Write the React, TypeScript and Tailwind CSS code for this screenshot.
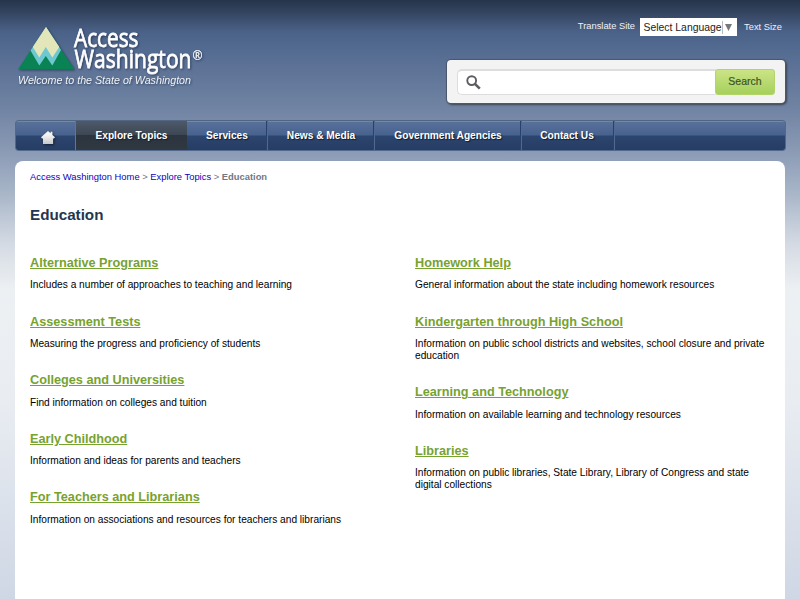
import { clsx } from "clsx";

type Topic = { title: string; text: string };

const navItems = [
  { label: "Explore Topics", className: "w-[111px]", active: true },
  { label: "Services", className: "w-20 pl-px" },
  { label: "News & Media", className: "w-[107px] pl-[2px]" },
  { label: "Government Agencies", className: "w-[147px] pl-[2px]" },
  { label: "Contact Us", className: "w-[93px]" }
];

const leftTopics: Topic[] = [
  { title: "Alternative Programs", text: "Includes a number of approaches to teaching and learning" },
  { title: "Assessment Tests", text: "Measuring the progress and proficiency of students" },
  { title: "Colleges and Universities", text: "Find information on colleges and tuition" },
  { title: "Early Childhood", text: "Information and ideas for parents and teachers" },
  {
    title: "For Teachers and Librarians",
    text: "Information on associations and resources for teachers and librarians"
  }
];

const rightTopics: Topic[] = [
  { title: "Homework Help", text: "General information about the state including homework resources" },
  {
    title: "Kindergarten through High School",
    text: "Information on public school districts and websites, school closure and private education"
  },
  { title: "Learning and Technology", text: "Information on available learning and technology resources" },
  {
    title: "Libraries",
    text: "Information on public libraries, State Library, Library of Congress and state digital collections"
  }
];

function Logo() {
  return (
    <a href="#" aria-label="Access Washington" className="block">
      <svg
        width="192"
        height="66"
        viewBox="0 0 192 66"
        className="overflow-visible drop-shadow-[1px_1px_1px_rgba(20,35,60,0.6)]"
      >
        <path d="M28 2 56.5 44.5H0Z" fill="#098354" />
        <path d="M28 2 43 25 34.3 40.5 27.8 31 21.3 40.5 12.5 25.5Z" fill="#6ec8d2" />
        <path d="M28 2 41.3 22 34.3 32.5 27.8 22 21.3 32.5 14.8 22Z" fill="#e2e6b9" />
        <g
          fill="#fff"
          stroke="#fff"
          strokeWidth="0.8"
          fontFamily="'Open Sans', 'Noto Sans', sans-serif"
          fontWeight="500"
        >
          <text x="56" y="21.7" fontSize="25.4" textLength="64.5" lengthAdjust="spacingAndGlyphs">
            Access
          </text>
          <text x="56.5" y="43" fontSize="25.4" textLength="117" lengthAdjust="spacingAndGlyphs">
            Washington
          </text>
          <text
            x="174.5"
            y="34.5"
            fontSize="12.5"
            strokeWidth="0.2"
            textLength="10"
            lengthAdjust="spacingAndGlyphs"
          >
            ®
          </text>
        </g>
        <text
          x="0"
          y="58.5"
          fill="#f1f3f7"
          fontFamily="'Liberation Sans', Arial, sans-serif"
          fontSize="10.7"
          fontStyle="italic"
          textLength="173"
          lengthAdjust="spacingAndGlyphs"
        >
          Welcome to the State of Washington
        </text>
      </svg>
    </a>
  );
}

function SearchIcon() {
  return (
    <svg width="15" height="15" viewBox="0 0 15 15" fill="none" stroke="#5c5d62">
      <circle cx="5.7" cy="5.6" r="4.4" strokeWidth="1.9" />
      <path d="m8.9 8.8 4.9 4.9" strokeWidth="2.6" />
    </svg>
  );
}

function HomeIcon() {
  return (
    <svg width="14" height="13" viewBox="0 0 14 13" className="drop-shadow-[1px_1px_1px_rgba(0,0,0,0.5)]">
      <defs>
        <linearGradient id="home" x1="0" y1="0" x2="0" y2="1">
          <stop offset="0.3" stopColor="#f4f4f4" />
          <stop offset="1" stopColor="#c6c8cb" />
        </linearGradient>
      </defs>
      <path d="M7 0 9.6 2.3V.8h1.8v3.1L14 6.3 13 7.4h-.9V13H2V7.4H1L0 6.3Z" fill="url(#home)" />
    </svg>
  );
}

function Header() {
  return (
    <header className="flex h-30 justify-between pl-[18px] pr-[15px]">
      <div className="pt-[25px]">
        <Logo />
      </div>
      <div className="flex w-[338px] flex-col items-end pt-[18px]">
        <div className="flex h-[18px] items-center pr-[3px] text-[9.35px] text-[#eef1f6]">
          <span className="mr-[5px] -mt-px">Translate Site</span>
          <div className="flex h-[18px] w-[97px] items-center bg-white pl-[3.5px] text-[10.4px] text-[#222]">
            <span className="w-[78px] pt-[2px] whitespace-nowrap">Select Language</span>
            <span className="flex h-[13px] items-center border-l border-[#bbb] pl-[2px]">
              <svg width="7" height="7" viewBox="0 0 7 7">
                <path d="M0 0h7L3.5 7Z" fill="#76777a" />
              </svg>
            </span>
          </div>
          <span className="ml-[7px] pt-px">Text Size</span>
        </div>
        <form className="mt-[24px] flex h-[43px] w-[338px] items-center rounded-[4px] bg-[#f3f3f3] pl-[10px] shadow-[0_0_0_1px_#4d586c,1px_1px_2px_1px_#3e4652]">
          <div className="flex h-[26px] w-[259px] items-center rounded-l-[5px] border border-t-2 border-r-0 border-[#dddddf] bg-white pl-[8px]">
            <SearchIcon />
          </div>
          <button
            type="button"
            className="-ml-px h-[26px] w-[60px] rounded-[3px] border border-[#b2d46a] bg-linear-to-b from-[#cbe486] to-[#a6d05b] pt-px text-[10.5px] text-[#3e5423] [-webkit-text-stroke:0.2px_#3e5423]"
          >
            Search
          </button>
        </form>
      </div>
    </header>
  );
}

function Nav() {
  return (
    <nav className="ml-[15px] flex h-[31px] w-[771px] overflow-hidden rounded-[4px] border border-[#52698b] border-t-[#506783] bg-[linear-gradient(to_bottom,#8ba0b8_0px,#587199_1px,#47628f_14px,#2d466f_15px,#263c63_100%)] text-[10.17px] font-bold text-white">
      <a
        href="#"
        aria-label="Home"
        className="flex w-[60px] items-center justify-center border-r border-r-[#5d769a] pl-[4px] pt-[4px]"
      >
        <HomeIcon />
      </a>
      {navItems.map((item) => (
        <a
          key={item.label}
          href="#"
          className={clsx(
            "flex shrink-0 items-center justify-center whitespace-nowrap pt-px [text-shadow:1px_1px_1px_#111c2d]",
            item.className,
            item.active
              ? "bg-[linear-gradient(to_bottom,#4d596a,#3d4753_48%,#2c353f_50%,#303842)]"
              : "border-r border-r-[#29426b] shadow-[1px_0_0_#4f6991]"
          )}
        >
          {item.label}
        </a>
      ))}
    </nav>
  );
}

function TopicList({ topics }: { topics: Topic[] }) {
  return (
    <ul className="w-[385px] shrink-0 pr-[30px]">
      {topics.map((topic) => (
        <li key={topic.title} className="mb-[18px]">
          <h2 className="text-[12.7px] leading-[16px] font-bold">
            <a href="#" className="text-[#77a22f] underline">
              {topic.title}
            </a>
          </h2>
          <p className="mt-[8.4px] pb-[4.2px] text-[10.17px] leading-[12px]">{topic.text}</p>
        </li>
      ))}
    </ul>
  );
}

export default function App() {
  return (
    <div className="flex h-[599px] w-[800px] flex-col overflow-hidden bg-[linear-gradient(to_bottom,#26344a_0px,#33445f_12px,#4b6288_32px,#546b91_50px,#7184a3_110px,#8a9ab5_150px,#aab7c9_195px,#d5dbe4_245px,#edf0f3_290px,#e9edf2_400px,#cfd7e5_599px)] font-['Liberation_Sans',Arial,sans-serif] text-black">
      <Header />
      <Nav />
      <main className="mx-[15px] mt-[10px] flex-1 rounded-t-[8px] bg-white px-[15px]">
        <p className="pt-[10px] text-[9.38px] leading-[12px] text-[#737785]">
          <a href="#" className="text-[#1200bb]">
            Access Washington Home
          </a>
          {" > "}
          <a href="#" className="text-[#1200bb]">
            Explore Topics
          </a>
          {" > "}
          <strong>Education</strong>
        </p>
        <h1 className="mt-[22px] text-[15.2px] leading-[20px] font-bold text-[#23364f]">Education</h1>
        <div className="mt-[30px] -mr-[15px] flex">
          <TopicList topics={leftTopics} />
          <TopicList topics={rightTopics} />
        </div>
      </main>
    </div>
  );
}
